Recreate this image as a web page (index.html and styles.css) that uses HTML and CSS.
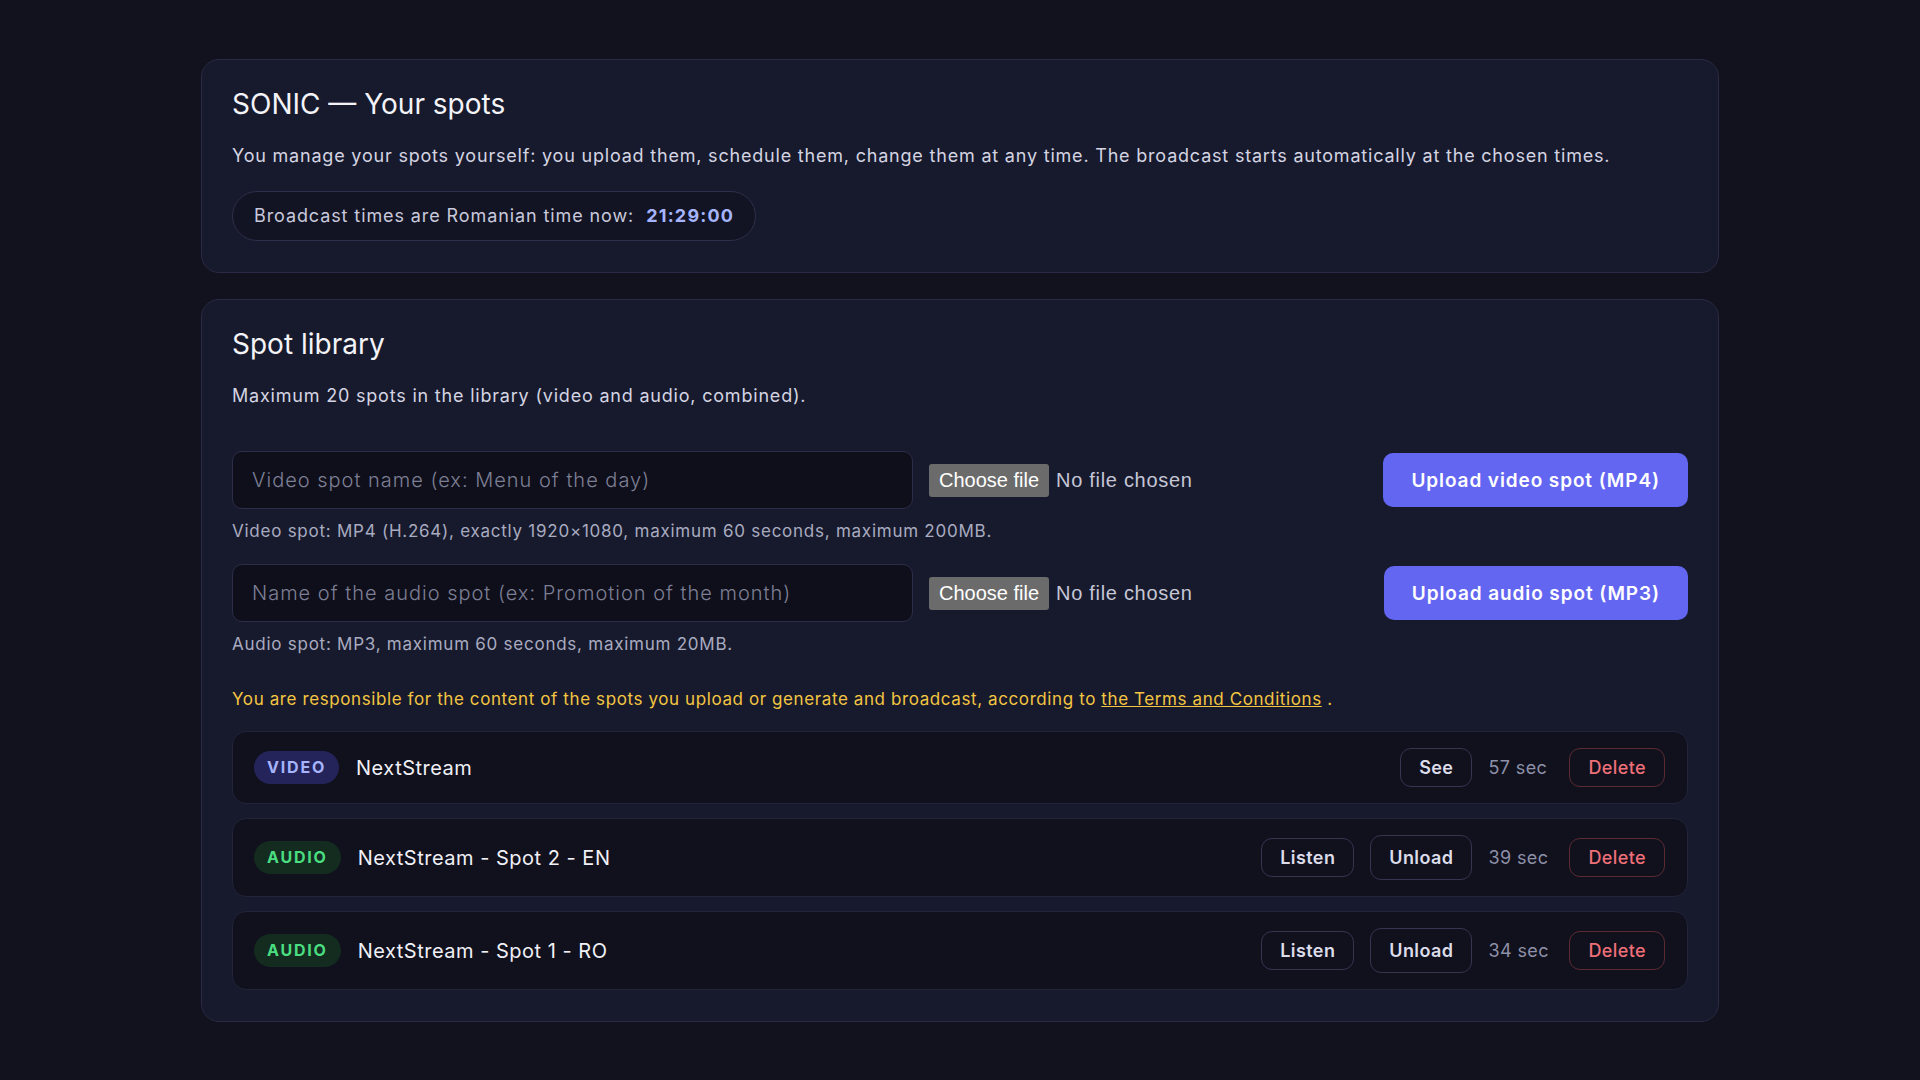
FILE: index.html
```html
<!DOCTYPE html>
<html lang="en">
<head>
    <meta charset="UTF-8">
    <meta name="viewport" content="width=device-width, initial-scale=1.0">
    <title>SONIC — Your spots</title>
    <link rel="stylesheet" href="styles.css">
</head>
<body>
    <div class="container">
        <section class="card">
            <h1>SONIC — Your spots</h1>
            <p class="lead">You manage your spots yourself: you upload them, schedule them, change them at any time. The broadcast starts automatically at the chosen times.</p>
            <div class="clock-pill">Broadcast times are Romanian time now: <strong id="clock">21:29:00</strong></div>
        </section>

        <section class="card">
            <h2>Spot library</h2>
            <p class="lead">Maximum 20 spots in the library (video and audio, combined).</p>

            <form class="upload-form">
                <div class="upload-row">
                    <input type="text" class="text-input" placeholder="Video spot name (ex: Menu of the day)">
                    <label class="file-picker">
                        <input type="file" accept="video/mp4" hidden>
                        <span class="file-btn">Choose file</span>
                        <span class="file-name">No file chosen</span>
                    </label>
                    <button type="button" class="btn-primary">Upload video spot (MP4)</button>
                </div>
                <p class="hint">Video spot: MP4 (H.264), exactly 1920×1080, maximum 60 seconds, maximum 200MB.</p>

                <div class="upload-row">
                    <input type="text" class="text-input" placeholder="Name of the audio spot (ex: Promotion of the month)">
                    <label class="file-picker">
                        <input type="file" accept="audio/mpeg" hidden>
                        <span class="file-btn">Choose file</span>
                        <span class="file-name">No file chosen</span>
                    </label>
                    <button type="button" class="btn-primary">Upload audio spot (MP3)</button>
                </div>
                <p class="hint">Audio spot: MP3, maximum 60 seconds, maximum 20MB.</p>
            </form>

            <p class="warning">You are responsible for the content of the spots you upload or generate and broadcast, according to <a href="#">the Terms and Conditions</a> .</p>

            <div class="spot-list">
                <div class="spot-row">
                    <span class="badge badge-video">VIDEO</span>
                    <span class="spot-name">NextStream</span>
                    <div class="spot-actions">
                        <button class="btn-ghost">See</button>
                        <span class="duration">57 sec</span>
                        <button class="btn-danger">Delete</button>
                    </div>
                </div>
                <div class="spot-row">
                    <span class="badge badge-audio">AUDIO</span>
                    <span class="spot-name">NextStream - Spot 2 - EN</span>
                    <div class="spot-actions">
                        <button class="btn-ghost">Listen</button>
                        <button class="btn-ghost btn-tall">Unload</button>
                        <span class="duration">39 sec</span>
                        <button class="btn-danger">Delete</button>
                    </div>
                </div>
                <div class="spot-row">
                    <span class="badge badge-audio">AUDIO</span>
                    <span class="spot-name">NextStream - Spot 1 - RO</span>
                    <div class="spot-actions">
                        <button class="btn-ghost">Listen</button>
                        <button class="btn-ghost btn-tall">Unload</button>
                        <span class="duration">34 sec</span>
                        <button class="btn-danger">Delete</button>
                    </div>
                </div>
            </div>
        </section>
    </div>
</body>
</html>
```

FILE: styles.css
```css
body {
    margin: 0;
    background-color: #12111e;
    font-family: Inter, "Noto Sans", sans-serif;
    color: #d4d4e2;
}
.container {
    width: 1518px;
    margin: 59px auto;
    display: flex;
    flex-direction: column;
    gap: 26px;
}
.card {
    background-color: #171a2c;
    border: 1px solid #2a2a45;
    border-radius: 18px;
    padding: 27px 30px 31px;
}
h1, h2 {
    margin: 0;
    font-size: 28px;
    line-height: 34px;
    font-weight: 400;
    color: #f3f3f8;
}
.lead {
    margin: 21px 0 0;
    font-size: 18px;
    line-height: 27px;
    letter-spacing: 0.8px;
    color: #d4d4e2;
}
.clock-pill {
    display: inline-block;
    margin-top: 22px;
    padding: 12px 21px;
    border: 1px solid #2e2f4a;
    border-radius: 999px;
    background-color: #131423;
    font-size: 18px;
    line-height: 24px;
    letter-spacing: 0.9px;
    color: #c8c9dc;
}
.clock-pill strong {
    margin-left: 6px;
    color: #a5b4fc;
    font-weight: 700;
    letter-spacing: 1.2px;
}

/* upload form */
.upload-form {
    margin-top: 42px;
}
.upload-row {
    display: flex;
    align-items: center;
    gap: 16px;
}
.text-input {
    width: 681px;
    height: 58px;
    box-sizing: border-box;
    padding: 0 19px;
    background-color: #0f0f1b;
    border: 1px solid #2c2d48;
    border-radius: 10px;
    font-family: Inter, sans-serif;
    font-size: 20px;
    font-weight: 300;
    letter-spacing: 1px;
    color: #e0e0ea;
}
.text-input::placeholder {
    color: #7d7f95;
}
.file-picker {
    display: flex;
    align-items: center;
    gap: 7px;
    font-family: "Liberation Sans", Arial, sans-serif;
    font-size: 20px;
    cursor: pointer;
}
.file-btn {
    padding: 4px 10px;
    background-color: #6b6b6b;
    color: #fff;
    border-radius: 3px;
    line-height: 25px;
}
.file-name {
    color: #c5c6d6;
    letter-spacing: 0.7px;
}
.btn-primary {
    margin-left: auto;
    height: 54px;
    padding: 0 28px;
    background-color: #6366f1;
    color: #fff;
    border: none;
    border-radius: 10px;
    font-family: Inter, sans-serif;
    font-size: 19px;
    font-weight: 600;
    letter-spacing: 0.9px;
    cursor: pointer;
}
.hint {
    margin: 11px 0 22px;
    font-size: 17px;
    line-height: 22px;
    letter-spacing: 0.75px;
    color: #a9abc0;
}
.upload-form .hint:last-child {
    margin-bottom: 0;
}
.warning {
    margin: 33px 0 0;
    font-size: 17px;
    line-height: 22px;
    letter-spacing: 0.6px;
    color: #f4c542;
}
.warning a {
    color: #f4c542;
}

/* spot library list */
.spot-list {
    margin-top: 21px;
    display: flex;
    flex-direction: column;
    gap: 14px;
}
.spot-row {
    display: flex;
    align-items: center;
    gap: 17px;
    padding: 16px 22px 16px 21px;
    background-color: #10111d;
    border: 1px solid #22243a;
    border-radius: 14px;
}
.badge {
    padding: 6px 13px;
    border-radius: 999px;
    font-size: 16px;
    line-height: 21px;
    font-weight: 700;
    letter-spacing: 1.8px;
}
.badge-video {
    background-color: #25245a;
    color: #a5b4fc;
}
.badge-audio {
    background-color: #142b20;
    color: #4ade80;
}
.spot-name {
    font-size: 20px;
    letter-spacing: 0.5px;
    color: #f0f0f6;
}
.spot-actions {
    margin-left: auto;
    display: flex;
    align-items: center;
    gap: 16px;
}
.btn-ghost,
.btn-danger {
    padding: 7px 18px;
    background: transparent;
    border: 1px solid #34354f;
    border-radius: 11px;
    font-family: Inter, sans-serif;
    font-size: 18px;
    line-height: 23px;
    font-weight: 600;
    letter-spacing: 0.4px;
    color: #dcdcea;
    cursor: pointer;
}
.btn-tall {
    padding: 10px 18px;
}
.btn-danger {
    border-color: #5b2b33;
    color: #ee6f78;
    font-weight: 500;
}
.duration {
    width: 65px;
    font-size: 18px;
    letter-spacing: 0.4px;
    color: #8e90a8;
}
```
